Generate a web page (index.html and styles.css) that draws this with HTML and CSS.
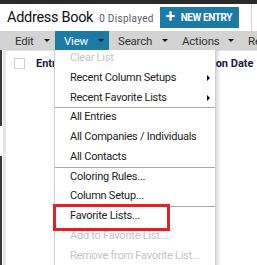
FILE: index.html
```html
<!DOCTYPE html>
<html lang="en">
<head>
  <meta charset="UTF-8" />
  <title>Address Book</title>
  <link rel="stylesheet" href="styles.css">
</head>
<body>
  <div class="topbar"></div>

  <header class="page-head">
    <h1>Address Book</h1>
    <span class="count">0 Displayed</span>
    <button class="new-btn"><span class="plus">+</span>NEW ENTRY</button>
  </header>

  <nav class="toolbar">
    <div class="tb-item tb-edit">Edit <i class="caret"></i></div>
    <div class="tb-item tb-view active">View <i class="caret"></i></div>
    <div class="tb-item tb-search">Search <i class="caret"></i></div>
    <div class="tb-item tb-actions">Actions <i class="caret"></i></div>
    <div class="tb-item tb-more">Re</div>
  </nav>

  <main class="content">
    <div class="edge"></div>
    <div class="panel">
      <div class="grid-head">
        <span class="check"></span>
        <span class="col">Entry</span>
        <span class="col col-date">Modification Date</span>
      </div>
    </div>
  </main>

  <ul class="menu">
    <li class="disabled">Clear List</li>
    <li class="sub">Recent Column Setups</li>
    <li class="sub">Recent Favorite Lists</li>
    <li class="sep">All Entries</li>
    <li>All Companies / Individuals</li>
    <li>All Contacts</li>
    <li class="sep">Coloring Rules...</li>
    <li>Column Setup...</li>
    <li class="sep">Favorite Lists...</li>
    <li class="disabled">Add to Favorite List...</li>
    <li class="disabled">Remove from Favorite List...</li>
    <div class="highlight"></div>
  </ul>
</body>
</html>
```

FILE: styles.css
```css
/* Base */
body {
  margin: 0;
  font-family: Roboto, 'Liberation Sans', sans-serif;
  background: #fff;
  color: #222;
  width: 257px;
  height: 265px;
  overflow: hidden;
  position: relative;
}

.topbar {
  height: 4px;
  background-color: #2a2a2a;
}

/* Title row */
.page-head {
  height: 27px;
  display: flex;
  align-items: center;
  padding-left: 7px;
  width: 244px;
  border-right: 1px solid #d6d6d6;
}

.page-head h1 {
  margin: 0;
  font-size: 14.5px;
  font-weight: 400;
  letter-spacing: -0.3px;
  color: #111;
}

.count {
  margin-left: 6px;
  font-size: 10px;
  letter-spacing: 0.3px;
  color: #5a5566;
  padding-top: 2px;
}

.new-btn {
  margin-left: 6px;
  height: 21px;
  width: 79px;
  border: none;
  background-color: #1c7aa6;
  color: #fff;
  font-family: Roboto, sans-serif;
  font-size: 10px;
  font-weight: 700;
  letter-spacing: -0.4px;
  display: flex;
  align-items: center;
  padding: 0 0 0 6px;
}

.plus {
  font-size: 17px;
  font-weight: 700;
  margin-right: 6px;
  line-height: 1;
  margin-top: -2px;
}

/* Toolbar */
.toolbar {
  position: relative;
  z-index: 2;
  height: 19px;
  background-color: #d3d3d3;
  display: flex;
  align-items: stretch;
  font-size: 11.5px;
  letter-spacing: -0.2px;
  color: #333;
}

.tb-item {
  box-sizing: border-box;
  display: flex;
  align-items: center;
  padding-left: 9px;
  flex-shrink: 0;
}

.tb-edit {
  padding-left: 15px;
  width: 55px;
}

.tb-view {
  width: 54px;
}

.tb-search {
  width: 64px;
}

.tb-actions {
  width: 66px;
}

.tb-item.active {
  background-color: #1c7aa6;
  color: #fff;
}

.caret {
  margin-left: auto;
  margin-right: 5px;
  width: 0;
  height: 0;
  border-left: 3px solid transparent;
  border-right: 3px solid transparent;
  border-top: 3px solid #111;
}

/* Grid area */
.content {
  display: flex;
  height: 215px;
}

.edge {
  width: 2px;
  background: linear-gradient(#3a3a3a 0 76px, #fff 76px 106px, #3a3a3a 106px);
}

.panel {
  flex: 1;
  margin-left: 1px;
  border-left: 3px solid #e6e6e6;
  border-top: 1px solid #e2e2e2;
}

.grid-head {
  display: flex;
  align-items: center;
  height: 24px;
  font-size: 11px;
  font-weight: 700;
  color: #1a1a3a;
}

.check {
  width: 9px;
  height: 9px;
  border: 1px solid #cfcfcf;
  margin-left: 8px;
  margin-right: 11px;
}

.col-date {
  margin-left: 104px;
  white-space: nowrap;
}

/* Dropdown */
.menu {
  position: absolute;
  z-index: 1;
  left: 54px;
  top: 47px;
  width: 160px;
  margin: 0;
  padding: 0;
  list-style: none;
  background: #fff;
  border: 1px solid #cfcfcf;
  box-shadow: 2px 2px 4px rgba(0, 0, 0, 0.18);
  font-size: 11px;
  letter-spacing: -0.25px;
  color: #222;
}

.menu li {
  box-sizing: border-box;
  height: 19.75px;
  line-height: 19.75px;
  padding-left: 15px;
  position: relative;
  white-space: nowrap;
}

.menu li.disabled {
  color: #c3c3c3;
}

.menu li.sep {
  border-top: 1px solid #a8a8a8;
  line-height: 18.75px;
}

.menu li.sub::after {
  content: "";
  position: absolute;
  right: 5px;
  top: 7px;
  border-top: 3px solid transparent;
  border-bottom: 3px solid transparent;
  border-left: 3px solid #111;
}

.highlight {
  position: absolute;
  left: -2px;
  top: 156px;
  width: 111px;
  height: 21px;
  border: 3px solid #e3202a;
}
```
